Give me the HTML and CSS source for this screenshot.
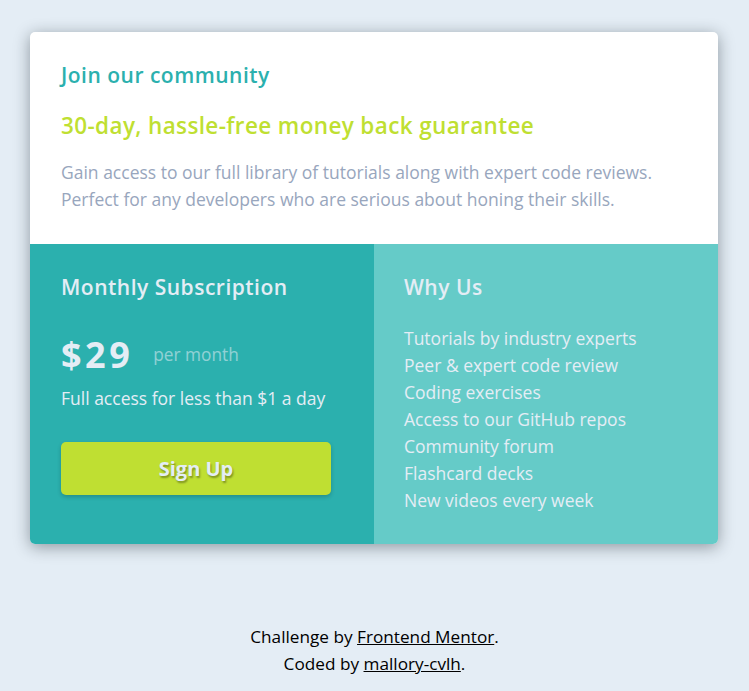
FILE: index.html
```html
<!DOCTYPE html>
<html lang="en">
<head>
<meta charset="utf-8">
<title>Single price grid</title>
<link rel="stylesheet" href="styles.css">
</head>
<body>
<main class="card">
  <section class="top">
    <h1 class="title">Join our community</h1>
    <h2 class="guarantee">30-day, hassle-free money back guarantee</h2>
    <p class="intro">Gain access to our full library of tutorials along with expert code reviews.<br>Perfect for any developers who are serious about honing their skills.</p>
  </section>
  <div class="bottom">
    <section class="sub">
      <h3 class="sub-title">Monthly Subscription</h3>
      <div class="price"><span class="amount">$29</span><span class="per">per month</span></div>
      <p class="access">Full access for less than $1 a day</p>
      <button class="btn">Sign Up</button>
    </section>
    <section class="why">
      <h3 class="why-title">Why Us</h3>
      <ul class="list">
        <li>Tutorials by industry experts</li>
        <li>Peer &amp; expert code review</li>
        <li>Coding exercises</li>
        <li>Access to our GitHub repos</li>
        <li>Community forum</li>
        <li>Flashcard decks</li>
        <li>New videos every week</li>
      </ul>
    </section>
  </div>
</main>
<footer class="attribution">
  Challenge by <a href="#">Frontend Mentor</a>.<br>
  Coded by <a href="#">mallory-cvlh</a>.
</footer>
</body>
</html>
```
FILE: styles.css
```css
* { box-sizing: border-box; margin: 0; padding: 0; }
body {
  background: #e4edf5;
  font-family: "Open Sans", "Liberation Sans", sans-serif;
  font-size: 17.5px;
  padding-top: 32px;
}
.card {
  width: 688px;
  margin: 0 0 0 30px;
  border-radius: 5px;
  overflow: hidden;
  box-shadow: 0 3px 16px rgba(20, 30, 40, 0.42);
  background: #fff;
}
.top { padding: 30px 31px 31px; }
.title { color: #2bb0ae; font-size: 21px; font-weight: 600; line-height: 26px; letter-spacing: 0.5px; }
.guarantee { color: #bfdf32; font-size: 22.5px; font-weight: 600; line-height: 28px; margin-top: 24px; letter-spacing: 0.37px; }
.intro { color: #98a6bd; line-height: 27px; margin-top: 19px; }
.bottom { display: grid; grid-template-columns: 344px 344px; height: 300px; }
.sub { background: #2bb0ae; color: #e4edf5; padding: 30px 31px; }
.why { background: #65cbc8; color: #e4edf5; padding: 30px 30px; }
.sub-title, .why-title { font-size: 21px; font-weight: 600; line-height: 26px; letter-spacing: 0.5px; }
.price { display: flex; align-items: center; margin-top: 32px; height: 44px; }
.amount { font-size: 36px; font-weight: 700; letter-spacing: 3.5px; }
.per { margin-left: 20px; opacity: 0.55; font-size: 17.3px; }
.access { margin-top: 9px; line-height: 26px; }
.btn {
  display: block;
  margin-top: 31px;
  width: 270px;
  height: 53px;
  border: none;
  border-radius: 5px;
  background: #bfdf32;
  color: #e4edf5;
  font-family: inherit;
  font-size: 20px;
  font-weight: 700;
  text-shadow: 1px 2px 2px rgba(0,0,0,0.35);
  box-shadow: 0 2px 4px rgba(0,0,0,0.2);
}
.list { list-style: none; margin-top: 25px; }
.list li { line-height: 27px; }
.attribution { text-align: center; margin-top: 79px; line-height: 27px; color: #000; font-size: 17.2px; }
.attribution a { color: #000; }
```
